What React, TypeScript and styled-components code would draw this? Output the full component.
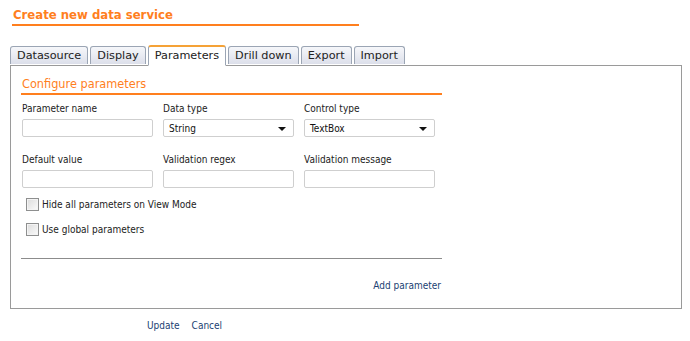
import React from "react";
import styled, { createGlobalStyle } from "styled-components";

const GlobalStyle = createGlobalStyle`
    body {
        margin: 0;
        background: #ffffff;
        font-family: "DejaVu Sans Condensed", "Liberation Sans", sans-serif;
        font-size: 10px;
        color: #222;
    }
`;

const Page = styled.div`
    padding: 8px 9px 0 10px;
    width: 672px;
`;

const Title = styled.h1`
    margin: 0 0 0 2px;
    width: 346px;
    padding: 0 0 2px 1px;
    border-bottom: 2px solid #ff7f1e;
    font-family: "DejaVu Sans Condensed", "Liberation Sans", sans-serif;
    font-size: 13px;
    font-weight: bold;
    color: #ff7f1e;
    line-height: 14px;
`;

const TabBar = styled.div`
    display: flex;
    gap: 2px;
    margin-top: 19px;
`;

const Tab = styled.div<{ $active?: boolean }>`
    height: ${(p) => (p.$active ? "18px" : "17px")};
    margin-top: ${(p) => (p.$active ? "0" : "1px")};
    margin-bottom: ${(p) => (p.$active ? "-1px" : "0")};
    padding: 0 6px;
    border: 1px solid #9ba5b4;
    border-bottom: ${(p) => (p.$active ? "1px solid #ffffff" : "none")};
    border-top: ${(p) => (p.$active ? "2px solid #f5a236" : "1px solid #9ba5b4")};
    border-radius: 3px 3px 0 0;
    background: ${(p) => (p.$active ? "#ffffff" : "linear-gradient(#f6f7fa, #dcdfea)")};
    font-family: "DejaVu Sans", Verdana, sans-serif;
    font-size: 11.25px;
    line-height: 18px;
    color: #222;
    position: relative;
    z-index: ${(p) => (p.$active ? 1 : 0)};
`;

const Panel = styled.div`
    border: 1px solid #9a9a9a;
    padding: 10px 0 12px 10px;
    height: 220px;
`;

const Section = styled.div`
    width: 421px;
`;

const SectionTitle = styled.h2`
    margin: 0;
    padding: 0 0 1px 1px;
    border-bottom: 2px solid #ff7f1e;
    font-family: "DejaVu Sans Condensed", "Liberation Sans", sans-serif;
    font-size: 12.6px;
    font-weight: normal;
    color: #ff7f1e;
    line-height: 16px;
`;

const FieldGrid = styled.div`
    display: grid;
    grid-template-columns: repeat(3, 131px);
    column-gap: 10px;
    row-gap: 16px;
    margin: 7px 0 0 1px;
`;

const Field = styled.div`
    display: flex;
    flex-direction: column;
    gap: 4px;
`;

const Label = styled.label`
    line-height: 13px;
    color: #222;
`;

const TextBox = styled.div`
    box-sizing: border-box;
    height: 18px;
    border: 1px solid #cfcfcf;
    border-radius: 2px;
    background: #fff;
`;

const Select = styled(TextBox)`
    display: flex;
    align-items: center;
    justify-content: space-between;
    padding: 0 7px 0 5px;
    color: #111;
`;

const Arrow = styled.span`
    width: 0;
    height: 0;
    border-left: 4px solid transparent;
    border-right: 4px solid transparent;
    border-top: 4px solid #111;
    margin-top: 1px;
`;

const Checks = styled.div`
    display: flex;
    flex-direction: column;
    gap: 12px;
    margin: 10px 0 0 5px;
`;

const CheckRow = styled.div`
    display: flex;
    align-items: center;
    gap: 3px;
    height: 13px;
`;

const CheckBox = styled.span`
    box-sizing: border-box;
    width: 13px;
    height: 13px;
    border: 1px solid #8e8f8f;
    background: linear-gradient(135deg, #dcdcdc, #fbfbfb);
    box-shadow: inset 0 0 0 1px #f4f4f4;
`;

const Separator = styled.div`
    height: 1px;
    background: #8c8c8c;
    margin-top: 22px;
`;

const Actions = styled.div`
    display: flex;
    justify-content: flex-end;
    margin-top: 20px;
    padding-right: 1px;
`;

const Link = styled.a`
    color: #1b3f73;
    text-decoration: none;
    line-height: 13px;
    cursor: pointer;
`;

const Footer = styled.div`
    display: flex;
    gap: 12px;
    padding: 10px 0 0 137px;
`;

export default function App() {
    return (
        <>
            <GlobalStyle />
            <Page>
                <Title>Create new data service</Title>
                <TabBar>
                    <Tab>Datasource</Tab>
                    <Tab>Display</Tab>
                    <Tab $active>Parameters</Tab>
                    <Tab>Drill down</Tab>
                    <Tab>Export</Tab>
                    <Tab>Import</Tab>
                </TabBar>
                <Panel>
                    <Section>
                        <SectionTitle>Configure parameters</SectionTitle>
                        <FieldGrid>
                            <Field>
                                <Label>Parameter name</Label>
                                <TextBox />
                            </Field>
                            <Field>
                                <Label>Data type</Label>
                                <Select>String<Arrow /></Select>
                            </Field>
                            <Field>
                                <Label>Control type</Label>
                                <Select>TextBox<Arrow /></Select>
                            </Field>
                            <Field>
                                <Label>Default value</Label>
                                <TextBox />
                            </Field>
                            <Field>
                                <Label>Validation regex</Label>
                                <TextBox />
                            </Field>
                            <Field>
                                <Label>Validation message</Label>
                                <TextBox />
                            </Field>
                        </FieldGrid>
                        <Checks>
                            <CheckRow><CheckBox />Hide all parameters on View Mode</CheckRow>
                            <CheckRow><CheckBox />Use global parameters</CheckRow>
                        </Checks>
                        <Separator />
                        <Actions>
                            <Link>Add parameter</Link>
                        </Actions>
                    </Section>
                </Panel>
                <Footer>
                    <Link>Update</Link>
                    <Link>Cancel</Link>
                </Footer>
            </Page>
        </>
    );
}
